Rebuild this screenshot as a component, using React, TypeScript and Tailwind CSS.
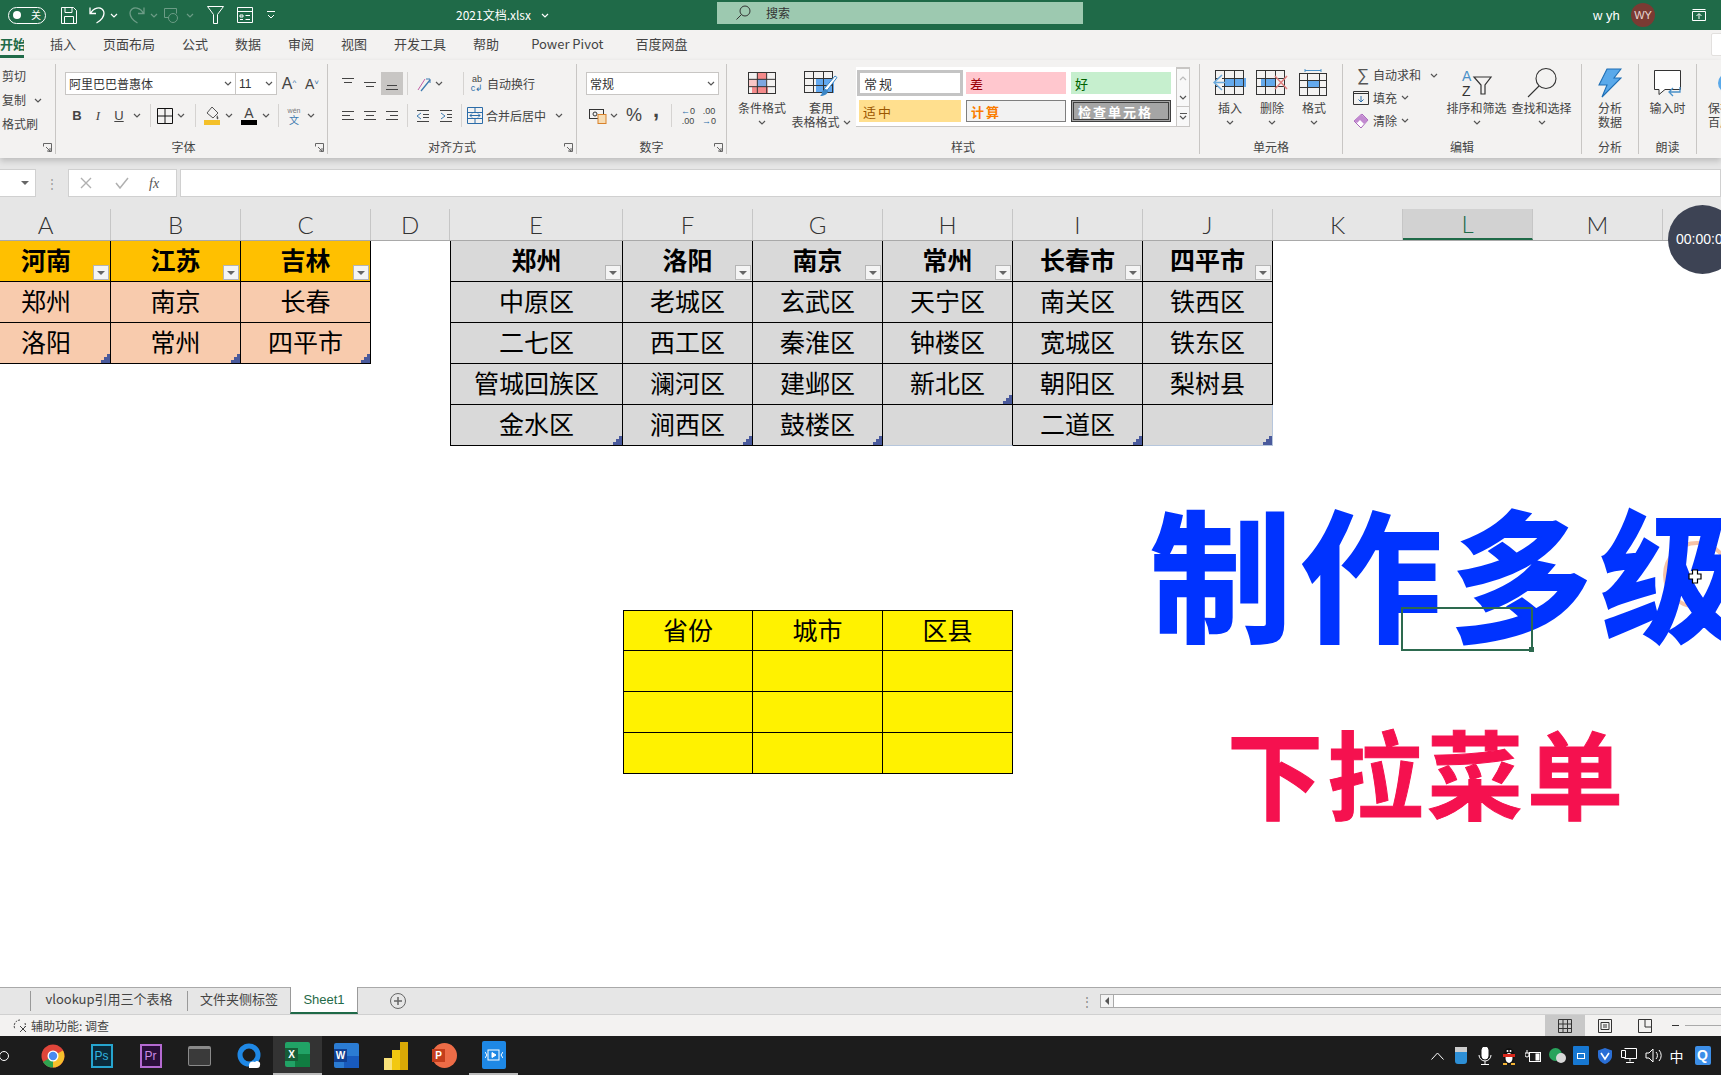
import React from 'react';

const CJK = '[font-family:"Noto_Sans_CJK_SC","Noto_Sans",sans-serif]';

const Caret = ({ color = '#555' }: { color?: string }) => (
  <svg width="8" height="5" viewBox="0 0 8 5" fill="none" stroke={color} strokeWidth="1.2"><path d="M1 1l3 3 3-3" /></svg>
);

const Slot = ({ w, children, active }: { w: string; children?: React.ReactNode; active?: boolean }) => (
  <div className={`${w} h-[23px] flex items-center justify-center shrink-0 ${active ? 'bg-[#c8c6c4]' : ''}`}>{children}</div>
);

const Sep = ({ cls }: { cls: string }) => <div className={`w-px h-[23px] bg-[#d5d3d1] shrink-0 ${cls}`} />;

const Launcher = () => (
  <svg width="9" height="9" viewBox="0 0 9 9" fill="none" stroke="#666" strokeWidth="1"><path d="M.5 3.500V.5h8v8h-3M3 4l4 4M7 5v3H4" /></svg>
);

// lines used by the alignment buttons
const Lines = ({ rows, top = 3 }: { rows: number[][]; top?: number }) => (
  <svg width="16" height="16" viewBox="0 0 16 16" stroke="#444" strokeWidth="1">
    {rows.map((r, i) => <path key={i} d={`M${r[0]} ${top + i * 4 + 0.5}H${r[1]}`} />)}
  </svg>
);

const Group = ({ w, label, launcher, children, labelClass = '' }: { w: string; label: string; launcher?: boolean; children: React.ReactNode; labelClass?: string }) => (
  <div className={`${w} shrink-0 border-r border-[#c8c6c4] flex flex-col`}>
    <div className="h-[74px] flex">{children}</div>
    <div className="h-[16px] pt-[2px] grid grid-cols-[1fr_auto_1fr] items-center text-[12px] leading-none text-[#444]">
      <span />
      <span className={labelClass}>{label}</span>
      <span className="justify-self-end pr-[3px] flex">{launcher && <Launcher />}</span>
    </div>
  </div>
);

const BigBtn = ({ w, icon, l1, l2, caret = true }: { w: string; icon: React.ReactNode; l1: string; l2?: string; caret?: boolean }) => (
  <div className={`${w} shrink-0 flex flex-col items-center text-[12px] leading-[14px] text-[#444]`}>
    <div className="h-[37px] flex items-center justify-center">{icon}</div>
    <div className="whitespace-nowrap">{l1}</div>
    <div className="h-[14px] flex items-center gap-[3px] whitespace-nowrap">
      {l2 && <span>{l2}</span>}
      {caret && <Caret />}
    </div>
  </div>
);

const Grid4 = ({ children, w = 28, h = 22 }: { children?: React.ReactNode; w?: number; h?: number }) => (
  <svg width={w + 4} height={h + 10} viewBox={`0 0 ${w + 4} ${h + 10}`} fill="none">
    <g transform="translate(2 5)">
      {children}
      <rect x=".5" y=".5" width={w - 1} height={h - 1} stroke="#333" />
      <path d={`M0 ${h / 3}H${w}M0 ${(2 * h) / 3}H${w}M${w / 3} 0V${h}M${(2 * w) / 3} 0V${h}`} stroke="#333" />
    </g>
  </svg>
);

const IconCond = () => (
  <Grid4>
    <rect x="9" width="10" height="7" fill="#f48a8a" />
    <rect x="9" y="7" width="9" height="8" fill="#7da7e0" />
    <rect x="4" y="15" width="16" height="7" fill="#f48a8a" />
    <rect x="1" y="7" width="8" height="8" fill="#f9c6c6" />
  </Grid4>
);

const IconTable = () => (
  <svg width="34" height="32" viewBox="0 0 34 32" fill="none">
    <g transform="translate(0 2)">
      <rect x="12" y="9" width="18" height="15" fill="#62a8ef" />
      <rect x=".5" y="2.500" width="28" height="21" stroke="#333" />
      <path d="M0 9.500H28M0 16.500H28M9.500 2V23M19.500 2V23" stroke="#333" />
      <path d="M20 20L31 7l2 1.500-10 13z" fill="#fff" stroke="#3b86c6" />
      <path d="M18 23c2-3 5-3 6-1 0 3-4 5-8 5 1-1 2-2 2-4z" fill="#3b86c6" />
    </g>
  </svg>
);

const IconInsert = () => (
  <svg width="34" height="26" viewBox="0 0 34 26" fill="none">
    <rect x="11" y="8" width="22" height="9" fill="#64a9ec" />
    <rect x="2.500" y=".5" width="28" height="24" stroke="#333" />
    <path d="M2 8.500H30M2 16.500H30M11.500 0V25M21.500 0V25" stroke="#333" />
    <path d="M9 5L1 12.500 9 20M1 12.500H14" stroke="#6aa9dc" strokeWidth="1.500" fill="#f3f2f1" />
  </svg>
);

const IconDelete = () => (
  <svg width="32" height="26" viewBox="0 0 32 26" fill="none">
    <rect x="5" y="8" width="14" height="9" fill="#64a9ec" />
    <rect x=".5" y=".5" width="28" height="24" stroke="#333" />
    <path d="M0 8.500H28M0 16.500H28M9.500 0V25M19.500 0V25" stroke="#333" />
    <path d="M19 6l12 13M31 6L19 19" stroke="#e08080" strokeWidth="1.500" />
  </svg>
);

const IconFormat = () => (
  <svg width="30" height="28" viewBox="0 0 30 28" fill="none">
    <path d="M6 1.500H22M6 0v3M22 0v3" stroke="#4a90c8" />
    <rect x="8" y="11" width="13" height="7" fill="#64a9ec" />
    <rect x=".5" y="4.500" width="27" height="22" stroke="#333" />
    <path d="M0 11.500H28M0 18.500H28M8.500 4V27M20.500 4V27" stroke="#333" />
  </svg>
);

const IconSort = () => (
  <svg width="32" height="30" viewBox="0 0 32 30" fill="none">
    <text x="1" y="13" fontSize="14" fill="#4a90c8" fontFamily="Liberation Sans">A</text>
    <text x="1" y="28" fontSize="14" fill="#333" fontFamily="Liberation Sans">Z</text>
    <path d="M13 9h17l-6 8v9h-4v-9z" stroke="#333" strokeWidth="1.200" />
  </svg>
);

const IconFind = () => (
  <svg width="32" height="32" viewBox="0 0 32 32" fill="none" stroke="#333" strokeWidth="1.100">
    <circle cx="20" cy="11.500" r="10" />
    <path d="M13 19L2 30" />
  </svg>
);

const IconBolt = () => (
  <svg width="24" height="30" viewBox="0 0 24 30">
    <path d="M9 1h14l-7 9h7L4 29l5-12H1z" fill="#5aa9ea" stroke="#1f6fb5" strokeWidth="1.100" />
  </svg>
);

const IconComment = () => (
  <svg width="30" height="28" viewBox="0 0 30 28" fill="none">
    <path d="M1.500 1.500h26v19H12l-6 5v-5H1.500z" stroke="#333" fill="#fff" />
    <path d="M27 18v5H17M20 19l-4 4 4 4" stroke="#4a90c8" strokeWidth="1.300" />
  </svg>
);

const sheetCols = 'grid-cols-[130px_130px_130px_79px_173px_130px_130px_130px_130px_130px_130px_130px_130px_130px]';
const letters = ['A', 'B', 'C', 'D', 'E', 'F', 'G', 'H', 'I', 'J', 'K', 'L', 'M', ''];

type Table = { col: number; row: number; kind: 'orange' | 'gray' | 'yellow'; cells: string[][] };

const tables: Table[] = [
  { col: 0, row: 0, kind: 'orange', cells: [['河南', '江苏', '吉林'], ['郑州', '南京', '长春'], ['洛阳', '常州', '四平市']] },
  {
    col: 4,
    row: 0,
    kind: 'gray',
    cells: [
      ['郑州', '洛阳', '南京', '常州', '长春市', '四平市'],
      ['中原区', '老城区', '玄武区', '天宁区', '南关区', '铁西区'],
      ['二七区', '西工区', '秦淮区', '钟楼区', '宽城区', '铁东区'],
      ['管城回族区', '澜河区', '建邺区', '新北区', '朝阳区', '梨树县'],
      ['金水区', '涧西区', '鼓楼区', '', '二道区', ''],
    ],
  },
  { col: 5, row: 9, kind: 'yellow', cells: [['省份', '城市', '区县'], ['', '', ''], ['', '', ''], ['', '', '']] },
];

// last filled row of a column gets the table's resize corner
const corners = ['0-2', '1-2', '2-2', '4-4', '5-4', '6-4', '7-3', '8-4', '9-4'];

const FilterBtn = () => (
  <div className="absolute right-px bottom-px w-[16px] h-[15px] bg-[#f4f4f4] border border-[#b5b5b5] flex items-center justify-center">
    <div className="w-0 h-0 border-l-[4px] border-r-[4px] border-t-[4px] border-l-transparent border-r-transparent border-t-[#666]" />
  </div>
);

const Corner = () => (
  <svg className="absolute right-0 bottom-0" width="9" height="9" viewBox="0 0 9 9"><path d="M9 0v9H0V6h3V3h3V0z" fill="#4a5a9c" /></svg>
);

function renderCell(r: number, c: number) {
  const t = tables.find((x) => r >= x.row && r < x.row + x.cells.length && c >= x.col && c < x.col + x.cells[0].length);
  if (!t) return <div key={`${r}-${c}`} />;
  const rr = r - t.row;
  const cc = c - t.col;
  const head = rr === 0;
  let bg = 'bg-[#d9d9d9]';
  if (t.kind === 'orange') bg = head ? 'bg-[#ffc000]' : 'bg-[#f8cbad]';
  if (t.kind === 'yellow') bg = 'bg-[#fff200]';
  const weak = t.kind === 'gray' && rr === 4 && (cc === 3 || cc === 5);
  return (
    <div
      key={`${r}-${c}`}
      className={`relative flex items-center justify-center pb-[3px] text-[25px] leading-none text-black border-r border-b border-black ${bg} ${cc === 0 ? 'border-l' : ''} ${t.kind === 'yellow' && head ? 'border-t' : ''} ${head && t.kind !== 'yellow' ? 'font-bold' : ''} ${weak ? 'border-b-[#b6c6dc]' : ''} ${weak && cc === 5 ? 'border-r-[#b6c6dc]' : ''}`}
    >
      {t.cells[rr][cc]}
      {head && t.kind !== 'yellow' && <FilterBtn />}
      {corners.includes(`${c}-${r}`) && <Corner />}
    </div>
  );
}

const styleCells = [
  { t: '常规', c: 'bg-white border-[3px] border-[#c4c4c4] text-[#333] -m-[2px]' },
  { t: '差', c: 'bg-[#ffc7ce] text-[#9c0006]' },
  { t: '好', c: 'bg-[#c6efce] text-[#006100]' },
  { t: '适中', c: 'bg-[#ffdf8e] text-[#9c5700]' },
  { t: '计算', c: 'bg-[#f2f2f2] border border-[#7f7f7f] text-[#fa7d00] font-bold' },
  { t: '检查单元格', c: 'bg-[#a5a5a5] border-[3px] border-double border-[#3f3f3f] text-white font-bold' },
];

const Tile = ({ cls, children }: { cls: string; children?: React.ReactNode }) => (
  <div className={`w-[22px] h-[24px] flex items-center justify-center text-[12px] font-['Liberation_Sans'] ${cls}`}>{children}</div>
);

const taskIcons: { w: string; el: React.ReactNode; active?: boolean; under?: boolean }[] = [
  {
    w: 'w-[49px]',
    el: (
      <svg width="24" height="24" viewBox="0 0 24 24">
        <circle cx="12" cy="12" r="11.500" fill="#e0453a" />
        <path d="M12 12L2 18a11.500 11.500 0 0 0 10 5.500z" fill="#2fa350" />
        <path d="M12 12l10-5.500A11.500 11.500 0 0 1 12 23.500z" fill="#f6c02c" />
        <circle cx="12" cy="12" r="5.500" fill="#fff" />
        <circle cx="12" cy="12" r="4.200" fill="#4a8af0" />
      </svg>
    ),
  },
  { w: 'w-[49px]', el: <Tile cls="border-2 border-[#26a5cf] bg-[#0b2a3a] text-[#31b5e0]">Ps</Tile> },
  { w: 'w-[49px]', el: <Tile cls="border-2 border-[#b56ad2] bg-[#2a0f3a] text-[#c98be6]">Pr</Tile> },
  { w: 'w-[49px]', el: <div className="w-[23px] h-[20px] rounded-[2px] bg-[#3a3a3a] border-t-[3px] border-[#8a8a8a] border-x border-b" /> },
  {
    w: 'w-[49px]',
    el: (
      <svg width="24" height="26" viewBox="0 0 24 26" fill="none">
        <circle cx="12" cy="12" r="9" stroke="#1f88e5" strokeWidth="5" />
        <path d="M12 23a4 4 0 0 1 6-4 3 3 0 0 1 5 3c0 2-1 3-3 3h-8z" fill="#fff" />
      </svg>
    ),
  },
  {
    w: 'w-[49px]',
    active: true,
    el: (
      <div className="relative w-[25px] h-[25px] rounded-[2px] bg-[#21a366]">
        <div className="absolute left-[10px] top-[12px] w-[15px] h-[13px] bg-[#107c41]" />
        <div className="absolute left-0 top-[6px] w-[13px] h-[13px] bg-[#185c37] text-white text-[10px] font-bold leading-[13px] text-center font-['Liberation_Sans']">X</div>
      </div>
    ),
  },
  {
    w: 'w-[49px]',
    el: (
      <div className="relative w-[25px] h-[25px] rounded-[2px] bg-[#2b7cd3]">
        <div className="absolute left-[10px] top-[13px] w-[15px] h-[12px] bg-[#185abd]" />
        <div className="absolute left-0 top-[6px] w-[13px] h-[13px] bg-[#103f91] text-white text-[10px] font-bold leading-[13px] text-center font-['Liberation_Sans']">W</div>
      </div>
    ),
  },
  {
    w: 'w-[49px]',
    el: (
      <div className="flex items-end gap-0 h-[28px]">
        <div className="w-[8px] h-[12px] bg-[#f9e27a]" />
        <div className="w-[8px] h-[20px] bg-[#f2c811]" />
        <div className="w-[8px] h-[28px] bg-[#d8a806]" />
      </div>
    ),
  },
  {
    w: 'w-[49px]',
    el: (
      <div className="relative w-[25px] h-[25px] rounded-full bg-[#ed6c47]">
        <div className="absolute left-0 top-[6px] w-[13px] h-[13px] bg-[#c43e1c] text-white text-[10px] font-bold leading-[13px] text-center font-['Liberation_Sans']">P</div>
      </div>
    ),
  },
  {
    w: 'w-[49px]',
    under: true,
    el: (
      <div className="w-[24px] h-[28px] rounded-[2px] bg-[#1e88e5] flex items-center justify-center">
        <svg width="18" height="12" viewBox="0 0 18 12" fill="none" stroke="#fff"><rect x="3" y="1" width="11" height="10" /><path d="M7 3.500l4 2.500-4 2.500z" fill="#fff" /><path d="M0 3l2 3-2 3M18 3l-2 3 2 3" /></svg>
      </div>
    ),
  },
];

export default function App() {
  return (
    <div className={`relative w-[1721px] h-[1075px] overflow-hidden flex flex-col bg-white ${CJK}`}>
      {/* title bar */}
      <div className="h-[30px] shrink-0 bg-[#1f6a48] flex items-center text-white">
        <div className="w-[8px] shrink-0" />
        <div className="w-[38px] h-[17px] rounded-full border border-white flex items-center justify-between px-[4px] shrink-0">
          <div className="w-[8px] h-[8px] rounded-full bg-white" />
          <span className="text-[10px] leading-none">关</span>
        </div>
        <div className="w-[15px] shrink-0" />
        <svg width="16" height="17" viewBox="0 0 16 17" fill="none" stroke="#fff" className="shrink-0"><path d="M.5.5h12l3 3v13H.5zM4 .5v5h7v-5M3.500 16.500v-7h9v7" /></svg>
        <div className="w-[12px] shrink-0" />
        <svg width="16" height="18" viewBox="0 0 16 18" fill="none" stroke="#fff" strokeWidth="1.300" className="shrink-0"><path d="M1 1.500v6h6M1.500 7.500C4 2 12-.5 14.500 5c2 5-3 10-7 12" /></svg>
        <div className="w-[5px] shrink-0" />
        <Caret color="#fff" />
        <div className="w-[11px] shrink-0" />
        <svg width="16" height="18" viewBox="0 0 16 18" fill="none" stroke="#6c9c86" strokeWidth="1.300" className="shrink-0"><path d="M15 1.500v6H9M14.500 7.500C12 2 4-.5 1.500 5c-2 5 3 10 7 12" /></svg>
        <div className="w-[5px] shrink-0" />
        <Caret color="#6c9c86" />
        <div className="w-[6px] shrink-0" />
        <svg width="16" height="18" viewBox="0 0 16 18" fill="none" stroke="#6c9c86" className="shrink-0"><path d="M.5 2.500h12v5M.5 2.500v9h4" /><circle cx="9" cy="12" r="4.500" /></svg>
        <div className="w-[6px] shrink-0" />
        <Caret color="#6c9c86" />
        <div className="w-[13px] shrink-0" />
        <svg width="17" height="18" viewBox="0 0 17 18" fill="none" stroke="#fff" className="shrink-0"><path d="M.5.5h16l-6 8v9h-4v-9z" /></svg>
        <div className="w-[13px] shrink-0" />
        <svg width="16" height="16" viewBox="0 0 16 16" fill="none" stroke="#fff" className="shrink-0"><path d="M.5.5h15v15H.5zM.5 4.500h15M3 8h3v2H3zM8.500 8.500H13M3 12.500h3M8.500 12.500H13" /></svg>
        <div className="w-[14px] shrink-0" />
        <svg width="8" height="8" viewBox="0 0 8 8" fill="none" stroke="#fff" className="shrink-0"><path d="M0 .5h8M1 4l3 3 3-3" /></svg>
        <div className="w-[181px] shrink-0" />
        <span className="text-[12px] leading-none whitespace-nowrap w-[85px] shrink-0">2021文档.xlsx</span>
        <Caret color="#fff" />
        <div className="w-[168px] shrink-0" />
        <div className="w-[366px] h-[22px] bg-[#9dc9b0] shrink-0 flex items-center text-[#333] text-[12px] -mt-[4px]">
          <svg width="16" height="16" viewBox="0 0 16 16" fill="none" stroke="#333" className="ml-[18px]"><circle cx="10" cy="6" r="5" /><path d="M6.500 9.500L1.500 14.500" /></svg>
          <span className="ml-[15px]">搜索</span>
        </div>
        <div className="w-[510px] shrink-0" />
        <span className="text-[13px] leading-none whitespace-nowrap w-[38px] shrink-0 font-['Liberation_Sans']">w yh</span>
        <div className="w-[24px] h-[24px] rounded-full bg-[#7a3b33] text-[#e8d8d4] text-[11px] flex items-center justify-center shrink-0 font-['Liberation_Sans']">WY</div>
        <div className="w-[37px] shrink-0" />
        <svg width="14" height="12" viewBox="0 0 14 12" fill="none" stroke="#fff" className="shrink-0"><path d="M.5 2.500h13v9H.5zM.5.5h13M7 10V5M4.500 7L7 4.500 9.500 7" /></svg>
      </div>

      {/* ribbon tabs */}
      <div className="h-[30px] shrink-0 bg-[#f3f2f1] flex items-center pb-[2px] text-[13px] text-[#444] relative whitespace-nowrap">
        <div className="relative w-[24px] h-full flex items-center font-bold text-[#1f6a48] overflow-hidden shrink-0">
          开始
          <div className="absolute left-0 right-0 bottom-0 h-[3px] bg-[#1f6a48]" />
        </div>
        <div className="flex gap-[27px] ml-[26px]">
          <span>插入</span>
          <span>页面布局</span>
          <span>公式</span>
          <span>数据</span>
          <span>审阅</span>
          <span>视图</span>
          <span>开发工具</span>
          <span>帮助</span>
          <span className="ml-[5px]">Power Pivot</span>
          <span className="ml-[5px]">百度网盘</span>
        </div>
        <div className="absolute left-[1711px] top-[3px] w-[20px] h-[23px] bg-white border border-[#e2e0de] rounded-[2px]" />
      </div>

      {/* ribbon */}
      <div className="relative z-10 h-[98px] shrink-0 bg-[#f3f2f1] py-1 flex shadow-[0_3px_6px_rgba(0,0,0,0.18)] whitespace-nowrap">
        <Group w="w-[56px]" label="板" launcher labelClass="-ml-[44px]">
          <div className="flex flex-col text-[12px] text-[#444] pl-[2px]">
            <div className="h-[24px] flex items-center">剪切</div>
            <div className="h-[24px] flex items-center gap-[8px]">复制<Caret /></div>
            <div className="h-[24px] flex items-center">格式刷</div>
          </div>
        </Group>

        <Group w="w-[272px]" label="字体" launcher labelClass="-translate-x-[8px]">
          <div className="flex flex-col pt-2 gap-[9px]">
            <div className="flex items-center pl-[9px]">
              <div className="w-[171px] h-[23px] bg-white border border-[#c8c6c4] flex items-center justify-between px-[3px] text-[12px] text-[#333]">阿里巴巴普惠体<Caret /></div>
              <div className="w-[41px] h-[23px] bg-white border border-l-0 border-[#c8c6c4] flex items-center justify-between px-[3px] text-[12px] text-[#333] font-['Liberation_Sans']">11<Caret /></div>
              <Slot w="w-[24px]"><span className="text-[16px] text-[#444] font-['Liberation_Sans'] leading-none">A<sup className="text-[8px] text-[#2b6ca8]">^</sup></span></Slot>
              <Slot w="w-[22px]"><span className="text-[14px] text-[#444] font-['Liberation_Sans'] leading-none">A<sup className="text-[8px] text-[#2b6ca8]">˅</sup></span></Slot>
            </div>
            <div className="flex items-center pl-[10px] font-['Liberation_Sans'] text-[#444]">
              <Slot w="w-[22px]"><span className="text-[13px] font-bold">B</span></Slot>
              <Slot w="w-[20px]"><span className="text-[13px] italic font-['Liberation_Serif']">I</span></Slot>
              <Slot w="w-[22px]"><span className="text-[13px] underline">U</span></Slot>
              <Slot w="w-[14px]"><Caret /></Slot>
              <Sep cls="mx-[6px]" />
              <Slot w="w-[16px]"><svg width="16" height="16" viewBox="0 0 16 16" fill="none" stroke="#111"><path d="M.5.5h15v15H.5zM8 0v16M0 8h16" /></svg></Slot>
              <Slot w="w-[16px]"><Caret /></Slot>
              <Sep cls="mx-[6px]" />
              <Slot w="w-[20px]">
                <svg width="17" height="19" viewBox="0 0 17 19" fill="none"><path d="M8 1l6 6-5 5-6-5z" stroke="#555" /><path d="M13 9c1 2 2 3 1 4s-2-1-1-4z" fill="#555" /><rect y="14" width="16" height="5" fill="#f4c029" /></svg>
              </Slot>
              <Slot w="w-[14px]"><Caret /></Slot>
              <Slot w="w-[26px]">
                <div className="flex flex-col items-center leading-none text-[14px]">A<div className="w-[16px] h-[5px] bg-black" /></div>
              </Slot>
              <Slot w="w-[8px]"><Caret /></Slot>
              <Sep cls="mx-[8px]" />
              <Slot w="w-[14px]"><div className="flex flex-col items-center text-[7px] leading-[8px] text-[#777]">wén<span className={`${CJK} text-[#3d7ab0] text-[10px] leading-[10px]`}>文</span></div></Slot>
              <Slot w="w-[20px]"><Caret /></Slot>
            </div>
          </div>
        </Group>

        <Group w="w-[249px]" label="对齐方式" launcher>
          <div className="flex flex-col pt-2 gap-[9px]">
            <div className="flex items-center pl-[9px]">
              <Slot w="w-[22px]"><Lines top={2} rows={[[2, 14], [4, 12]]} /></Slot>
              <Slot w="w-[22px]"><Lines top={6} rows={[[2, 14], [4, 12]]} /></Slot>
              <Slot w="w-[22px]" active><Lines top={9} rows={[[3, 13], [2, 14]]} /></Slot>
              <Sep cls="mx-[4px]" />
              <Slot w="w-[23px]">
                <svg width="16" height="16" viewBox="0 0 16 16" fill="none"><path d="M2 14L9 3" stroke="#c25ea5" /><path d="M5 15l9-11" stroke="#3d7ab0" strokeWidth="1.300" /><path d="M10 3h4v4" stroke="#3d7ab0" /></svg>
              </Slot>
              <Slot w="w-[8px]"><Caret /></Slot>
              <Sep cls="ml-[20px] mr-[4px]" />
              <Slot w="w-[18px]"><span className="text-[9px] leading-[9px] text-[#444] text-center font-['Liberation_Sans']">ab<br /><span className="text-[#2b6ca8]">c↲</span></span></Slot>
              <span className="ml-[1px] text-[12px] text-[#444]">自动换行</span>
            </div>
            <div className="flex items-center pl-[9px]">
              <Slot w="w-[22px]"><Lines rows={[[2, 14], [2, 10], [2, 14]]} /></Slot>
              <Slot w="w-[22px]"><Lines rows={[[2, 14], [4, 12], [2, 14]]} /></Slot>
              <Slot w="w-[22px]"><Lines rows={[[2, 14], [6, 14], [2, 14]]} /></Slot>
              <Sep cls="mx-[4px]" />
              <Slot w="w-[22px]"><svg width="16" height="16" viewBox="0 0 16 16" fill="none" stroke="#444"><path d="M2 2.500h12M2 13.500h12M8 6.500h6M8 9.500h6" /><path d="M6 5L2 8l4 3" stroke="#3d7ab0" /></svg></Slot>
              <Slot w="w-[23px]"><svg width="16" height="16" viewBox="0 0 16 16" fill="none" stroke="#444"><path d="M2 2.500h12M2 13.500h12M9 6.500h5M9 9.500h5" /><path d="M3 5l4 3-4 3" stroke="#3d7ab0" /></svg></Slot>
              <Sep cls="ml-[4px] mr-[4px]" />
              <Slot w="w-[18px]"><svg width="16" height="17" viewBox="0 0 16 17" fill="none" stroke="#2b6ca8"><path d="M.5.5h15v16H.5zM0 5.500h16M0 11.500h16M8 0v5M8 12v5M3 8.500h10M5 6.500l-2 2 2 2M11 6.500l2 2-2 2" /></svg></Slot>
              <span className="ml-[2px] w-[60px] text-[12px] text-[#444]">合并后居中</span>
              <Slot w="w-[26px]"><Caret /></Slot>
            </div>
          </div>
        </Group>

        <Group w="w-[150px]" label="数字" launcher>
          <div className="flex flex-col pt-2 gap-[9px]">
            <div className="pl-[9px]">
              <div className="w-[133px] h-[23px] bg-white border border-[#c8c6c4] flex items-center justify-between px-[3px] text-[12px] text-[#333]">常规<Caret /></div>
            </div>
            <div className="flex items-center pl-[9px] text-[#444] font-['Liberation_Sans']">
              <Slot w="w-[24px]"><svg width="18" height="17" viewBox="0 0 18 17" fill="none"><rect x=".5" y="2.500" width="14" height="9" stroke="#333" /><circle cx="6" cy="7" r="2" stroke="#333" /><rect x="9" y="7.500" width="8" height="9" fill="#f6dcb4" stroke="#d9822b" /></svg></Slot>
              <Slot w="w-[8px]"><Caret /></Slot>
              <div className="w-[4px]" />
              <Slot w="w-[24px]"><span className="text-[18px]">%</span></Slot>
              <Slot w="w-[20px]"><span className="text-[22px] font-bold leading-none -mt-[12px]">,</span></Slot>
              <Sep cls="mx-[5px]" />
              <Slot w="w-[22px]"><span className="text-[9px] leading-[10px] text-center"><span className="text-[#2b6ca8]">←</span>0<br />.00</span></Slot>
              <Slot w="w-[20px]"><span className="text-[9px] leading-[10px] text-center">.00<br /><span className="text-[#2b6ca8]">→</span>0</span></Slot>
            </div>
          </div>
        </Group>

        <Group w="w-[473px]" label="样式">
          <div className="w-[7px] shrink-0" />
          <BigBtn w="w-[56px]" icon={<IconCond />} l1="条件格式" />
          <BigBtn w="w-[62px]" icon={<IconTable />} l1="套用" l2="表格格式" />
          <div className="ml-[4px] mt-[3px] w-[320px] h-[60px] bg-white border-b border-[#c8c6c4] pt-[5px] pl-[3px] pr-[4px] grid grid-cols-[102px_100px_100px] gap-x-[5px] gap-y-[6px] grid-rows-[22px_22px]">
            {styleCells.map((s) => (
              <div key={s.t} className={`flex items-center pl-[4px] text-[13px] tracking-[2px] leading-none box-border ${s.c}`}>{s.t}</div>
            ))}
          </div>
          <div className="mt-[3px] w-[14px] h-[60px] flex flex-col border border-[#c8c6c4] bg-[#f8f8f8]">
            <div className="h-[20px] border-b border-[#c8c6c4] flex items-center justify-center rotate-180"><Caret color="#bbb" /></div>
            <div className="h-[19px] border-b border-[#c8c6c4] flex items-center justify-center"><Caret /></div>
            <div className="flex-1 flex flex-col items-center justify-center gap-[1px]"><div className="w-[7px] h-px bg-[#555]" /><Caret /></div>
          </div>
        </Group>

        <Group w="w-[143px]" label="单元格">
          <div className="w-[9px] shrink-0" />
          <BigBtn w="w-[42px]" icon={<IconInsert />} l1="插入" />
          <BigBtn w="w-[42px]" icon={<IconDelete />} l1="删除" />
          <BigBtn w="w-[42px]" icon={<IconFormat />} l1="格式" />
        </Group>

        <Group w="w-[239px]" label="编辑">
          <div className="w-[10px] shrink-0" />
          <div className="w-[90px] shrink-0 flex flex-col text-[12px] text-[#444]">
            <div className="h-[22px] flex items-center">
              <span className="w-[20px] text-center text-[17px] leading-none text-[#555] font-['Liberation_Sans']">∑</span>
              <span className="w-[48px]">自动求和</span>
              <span className="ml-[9px]"><Caret /></span>
            </div>
            <div className="h-[23px] flex items-center">
              <span className="w-[20px]">
                <svg width="16" height="14" viewBox="0 0 16 14" fill="none" stroke="#333"><path d="M.5.5h15v13H.5zM.5 2.500h15" /><path d="M8 5v6M5.500 8.500L8 11l2.500-2.500" stroke="#2b6ca8" /></svg>
              </span>
              <span>填充</span>
              <span className="ml-[4px]"><Caret /></span>
            </div>
            <div className="h-[23px] flex items-center">
              <span className="w-[20px]">
                <svg width="16" height="16" viewBox="0 0 16 16"><path d="M9 1l6 6-7 8-7-7z" fill="#fff" stroke="#a866ba" /><path d="M1 8l7-7 7 6-4 4-4-4-3 3z" fill="#c28ad0" /></svg>
              </span>
              <span>清除</span>
              <span className="ml-[4px]"><Caret /></span>
            </div>
          </div>
          <div className="w-[1px] shrink-0" />
          <BigBtn w="w-[65px]" icon={<IconSort />} l1="排序和筛选" />
          <BigBtn w="w-[65px]" icon={<IconFind />} l1="查找和选择" />
        </Group>

        <Group w="w-[57px]" label="分析">
          <BigBtn w="w-[56px]" icon={<IconBolt />} l1="分析" l2="数据" caret={false} />
        </Group>
        <Group w="w-[58px]" label="朗读">
          <BigBtn w="w-[57px]" icon={<IconComment />} l1="输入时" caret={false} />
        </Group>
        <div className="pl-[11px] flex flex-col text-[12px] leading-[14px] text-[#444]">
          <div className="h-[37px] flex items-center pl-[10px]"><div className="w-[20px] h-[20px] rounded-full bg-[#5aa9ea]" /></div>
          <div>保存到</div>
          <div>百度网盘</div>
        </div>
      </div>

      {/* formula bar */}
      <div className="h-[51px] shrink-0 bg-[#e6e6e6] flex items-start pt-[11px]">
        <div className="w-[36px] h-[28px] bg-white border-y border-r border-[#d0d0d0] flex items-center justify-end pr-[6px] shrink-0">
          <div className="w-0 h-0 border-l-[4px] border-r-[4px] border-t-[4px] border-l-transparent border-r-transparent border-t-[#666]" />
        </div>
        <div className="w-[32px] h-[28px] flex items-center justify-center text-[#999] text-[12px] leading-none shrink-0">⋮</div>
        <div className="w-[109px] h-[28px] bg-white border border-[#d0d0d0] flex items-center shrink-0">
          <span className="w-[36px] pl-[11px] text-[#b0b0b0]"><svg width="12" height="12" viewBox="0 0 12 12" stroke="currentColor" strokeWidth="1.400"><path d="M1 1l10 10M11 1L1 11" /></svg></span>
          <span className="w-[36px] pl-[10px] text-[#b0b0b0]"><svg width="14" height="12" viewBox="0 0 14 12" fill="none" stroke="currentColor" strokeWidth="1.500"><path d="M1 6l4 5 8-10" /></svg></span>
          <span className="pl-[8px] italic text-[14px] text-[#555] font-['Liberation_Serif']">fx</span>
        </div>
        <div className="flex-1 h-[28px] ml-[3px] bg-white border border-[#d0d0d0]" />
      </div>

      {/* column headers */}
      <div className={`h-[32px] shrink-0 bg-[#e6e6e6] border-b border-[#a9a9a9] grid -ml-[19px] w-[1771px] ${sheetCols}`}>
        {letters.map((l) => (
          <div
            key={l}
            className={`flex items-center justify-center text-[24px] leading-none font-['Lato'] font-light border-r border-[#c6c6c6] ${l === 'L' ? 'bg-[#d2d2d2] border-b-2 border-b-[#1f6a48] text-[#1f6a48]' : 'text-[#333]'}`}
          >
            {l}
          </div>
        ))}
      </div>

      {/* sheet */}
      <div className="relative flex-1 min-h-0 overflow-hidden">
        <div className={`grid -ml-[19px] w-[1771px] auto-rows-[41px] ${sheetCols}`}>
          {Array.from({ length: 14 }).flatMap((_, r) => letters.map((__, c) => renderCell(r, c)))}
        </div>
        <svg className="absolute left-[1655px] top-[294px]" width="66" height="80" viewBox="0 0 66 80" fill="none" stroke="#f6c3a8" strokeWidth="4"><circle cx="42" cy="40" r="32" /></svg>
        <div className="absolute left-[1150px] top-[257px] whitespace-nowrap text-[142px] tracking-[8px] leading-none font-bold text-[#0033ff] [-webkit-text-stroke:2px_#0033ff]">制作多级</div>
        <div className="absolute left-[1227px] top-[482px] whitespace-nowrap text-[96px] tracking-[4px] leading-none font-bold text-[#f5114f] [-webkit-text-stroke:1px_#f5114f]">下拉菜单</div>
        <div className="absolute left-[1401px] top-[366px] w-[132px] h-[44px] border-2 border-[#2d6a4f]">
          <div className="absolute -right-[3px] -bottom-[3px] w-[5px] h-[5px] bg-[#2d6a4f]" />
        </div>
        <svg className="absolute left-[1688px] top-[328px]" width="14" height="15" viewBox="0 0 14 15"><path d="M4.500 1h5v4h3.500v5H9.500v4h-5v-4H1V5h3.500z" fill="#fff" stroke="#000" strokeWidth="1.200" /></svg>
      </div>

      {/* timer bubble */}
      <div className="absolute left-[1668px] top-[205px] w-[69px] h-[69px] rounded-full bg-[#3d4354] flex items-center pl-[8px] text-white text-[14px] font-['Liberation_Sans'] whitespace-nowrap">00:00:00</div>

      {/* sheet tabs */}
      <div className="h-[27px] shrink-0 bg-[#e6e6e6] border-t border-[#a9a9a9] flex items-center text-[13px] text-[#444] whitespace-nowrap">
        <div className="w-[30px] shrink-0" />
        <div className="w-px h-[20px] bg-[#999] shrink-0" />
        <span className="w-[156px] text-center shrink-0 pb-[4px]">vlookup引用三个表格</span>
        <div className="w-px h-[20px] bg-[#999] shrink-0" />
        <span className="w-[102px] text-center shrink-0 pb-[4px]">文件夹侧标签</span>
        <div className="w-[68px] h-[27px] -mt-[1px] bg-white border-x border-b-2 border-[#9a9a9a] border-b-[#1f6a48] text-[#1f6a48] flex items-center justify-center shrink-0 font-['Liberation_Sans']">Sheet1</div>
        <div className="w-[32px] shrink-0" />
        <svg width="16" height="16" viewBox="0 0 16 16" fill="none" stroke="#666" className="shrink-0"><circle cx="8" cy="8" r="7.500" /><path d="M8 4v8M4 8h8" strokeWidth="1.500" /></svg>
        <div className="w-[675px] shrink-0" />
        <span className="text-[#888] text-[12px] w-[19px] shrink-0">⋮</span>
        <div className="w-[14px] h-[14px] bg-[#f3f3f3] border border-[#a9a9a9] flex items-center justify-center shrink-0">
          <div className="w-0 h-0 border-t-[4px] border-b-[4px] border-r-[4px] border-t-transparent border-b-transparent border-r-[#555]" />
        </div>
        <div className="flex-1 h-[14px] bg-white border-y border-[#a9a9a9]" />
      </div>

      {/* status bar */}
      <div className="h-[22px] shrink-0 bg-[#f3f2f1] border-t border-[#d0d0d0] flex items-center text-[12px] text-[#444] whitespace-nowrap">
        <svg width="16" height="16" viewBox="0 0 16 16" fill="none" stroke="#444" className="ml-[12px] shrink-0"><path d="M8 2a6 6 0 0 0-5 9M13 5a6 6 0 0 1 0 4" strokeDasharray="2 1" /><path d="M8 8l6 6M14 8l-6 6" /></svg>
        <span className="ml-[3px]">辅助功能: 调查</span>
        <div className="flex-1" />
        <div className="w-[40px] h-full bg-[#c8c8c8] flex items-center justify-center">
          <svg width="14" height="14" viewBox="0 0 14 14" fill="none" stroke="#333"><path d="M.5.5h13v13H.5zM.5 5h13M.5 9.500h13M5 0v14M9.500 0v14" /></svg>
        </div>
        <div className="w-[40px] h-full flex items-center justify-center">
          <svg width="14" height="14" viewBox="0 0 14 14" fill="none" stroke="#333"><path d="M.5.5h13v13H.5zM3 3.500h8v7H3zM5 6h4M5 8h4" /></svg>
        </div>
        <div className="w-[40px] h-full flex items-center justify-center">
          <svg width="14" height="14" viewBox="0 0 14 14" fill="none" stroke="#333"><path d="M.5.5h13v13H.5zM7 0v8h6" /></svg>
        </div>
        <div className="w-[20px] flex justify-center"><div className="w-[7px] h-px bg-[#333]" /></div>
        <div className="w-[36px] h-px bg-[#aaa]" />
      </div>

      {/* taskbar */}
      <div className="h-[39px] shrink-0 bg-[#1c1c1c] flex items-center">
        <div className="w-[28px] shrink-0 flex"><div className="w-[10px] h-[10px] rounded-full border border-white -ml-[1px]" /></div>
        {taskIcons.map((t, i) => (
          <div key={i} className={`${t.w} h-full shrink-0 flex items-center justify-center ${t.active ? 'bg-[#333] border-b-2 border-[#bbb]' : ''} ${t.under ? 'border-b-2 border-[#bbb]' : ''}`}>{t.el}</div>
        ))}
        <div className="flex-1" />
        <div className="flex items-center text-white">
          <div className="w-[24px] flex justify-center"><svg width="13" height="8" viewBox="0 0 13 8" fill="none" stroke="#fff"><path d="M.5 7.500l6-6.500 6 6.500" /></svg></div>
          <div className="w-[24px] flex justify-center"><div className="w-[12px] h-[17px] rounded-b-[3px] bg-[#2d8fd6] border-t-[5px] border-[#ccc]" /></div>
          <div className="w-[24px] flex justify-center"><svg width="14" height="18" viewBox="0 0 14 18" fill="none" stroke="#fff"><rect x="4" y="0" width="6" height="12" rx="3" fill="#fff" /><path d="M1 8a6 6 0 0 0 12 0M7 14v3M3 17.500h8" /></svg></div>
          <div className="w-[24px] flex justify-center"><svg width="16" height="19" viewBox="0 0 16 19"><ellipse cx="8" cy="10" rx="5.500" ry="8" fill="#111" /><ellipse cx="8" cy="12" rx="3.500" ry="5" fill="#fff" /><circle cx="6.500" cy="5" r="1" fill="#fff" /><circle cx="9.500" cy="5" r="1" fill="#fff" /><rect x="2" y="8" width="12" height="3" fill="#d8281c" /><path d="M2 18h4M10 18h4" stroke="#f2b233" strokeWidth="2" /></svg></div>
          <div className="w-[24px] flex justify-center"><svg width="16" height="14" viewBox="0 0 16 14" fill="none" stroke="#fff"><rect x="4.500" y="3.500" width="11" height="9" /><rect x="11" y="5" width="3" height="6" fill="#fff" /><path d="M2 1v3M0 4h4v2a2 2 0 0 1-4 0z" /></svg></div>
          <div className="w-[24px] flex justify-center"><svg width="17" height="15" viewBox="0 0 17 15"><circle cx="6.500" cy="6.500" r="6.500" fill="#29a35c" /><circle cx="12" cy="10" r="5" fill="#d8d8d8" /></svg></div>
          <div className="w-[24px] flex justify-center"><div className="w-[16px] h-[19px] rounded-[1px] bg-[#1778d2] flex items-center justify-center"><div className="w-[8px] h-[6px] border border-white" /></div></div>
          <div className="w-[24px] flex justify-center"><svg width="16" height="18" viewBox="0 0 16 18" fill="none"><path d="M8 1l7 2.500V9c0 4-4 7-7 8-3-1-7-4-7-8V3.500z" fill="#2a6fd6" /><path d="M4 6l4 6 4-6" stroke="#fff" strokeWidth="1.600" /></svg></div>
          <div className="w-[24px] flex justify-center"><svg width="16" height="15" viewBox="0 0 16 15" fill="none" stroke="#fff"><path d="M3.500.5h12v10h-12M.5 2.500h4v7h-4zM9 10.500v3M5 14.500h8" /></svg></div>
          <div className="w-[24px] flex justify-center"><svg width="17" height="15" viewBox="0 0 17 15" fill="none" stroke="#fff"><path d="M1 5h3l4-4v13l-4-4H1zM11 4a5 5 0 0 1 0 7M14 2a8 8 0 0 1 0 11" /></svg></div>
          <div className="w-[23px] text-center text-[14px] leading-none">中</div>
          <div className="w-[29px] flex justify-center"><div className="w-[16px] h-[19px] rounded-[2px] bg-[#3d8fe8] text-white text-[14px] leading-[19px] text-center font-['Liberation_Sans'] font-bold">Q</div></div>
          <div className="w-[4px]" />
        </div>
      </div>
    </div>
  );
}
